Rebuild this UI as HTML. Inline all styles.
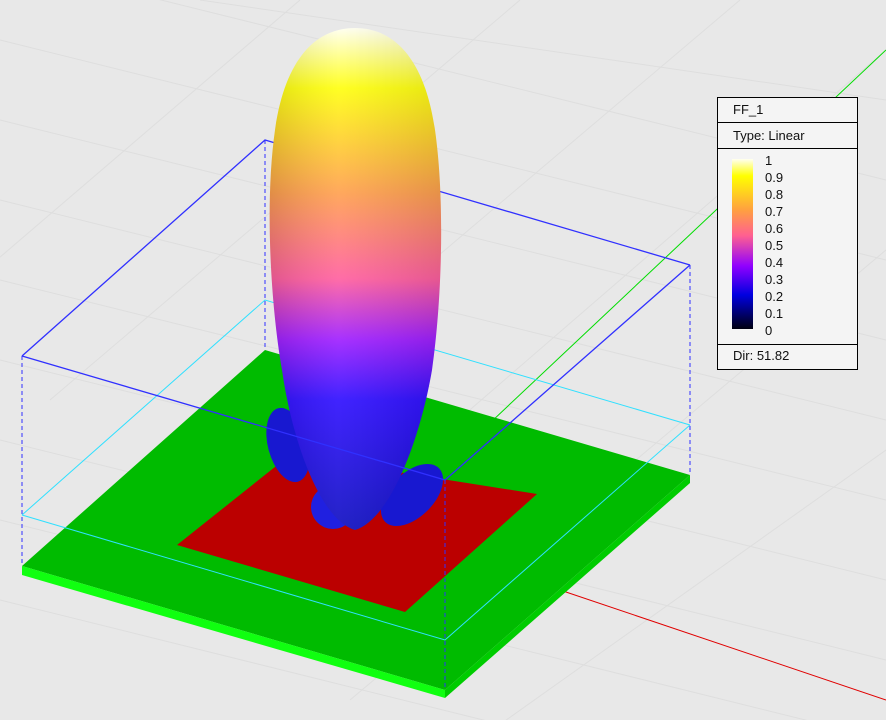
<!DOCTYPE html>
<html><head><style>
html,body{margin:0;width:886px;height:720px;overflow:hidden;background:#e8e8e8;font-family:"Liberation Sans",sans-serif}
svg{position:absolute;left:0;top:0}
#leg{position:absolute;left:717px;top:97px;width:141px;height:273px;box-sizing:border-box;background:#f4f4f4;border:1px solid #000;font-size:13px;color:#111}
.r{border-bottom:1px solid #000;padding-left:15px;box-sizing:border-box}
.n{position:absolute;left:47px;font-size:13px}
</style></head><body>
<svg width="886" height="720">
<defs>
<linearGradient id="lob" x1="0" y1="28" x2="0" y2="530" gradientUnits="userSpaceOnUse">
<stop offset="0" stop-color="#fffff0"/><stop offset="0.12" stop-color="#ffff10"/><stop offset="0.33" stop-color="#ffa050"/><stop offset="0.5" stop-color="#ff60a0"/><stop offset="0.62" stop-color="#a020ff"/><stop offset="0.74" stop-color="#3010ff"/><stop offset="1" stop-color="#1010c0"/>
</linearGradient>
<linearGradient id="shade" x1="0" x2="1">
<stop offset="0" stop-color="#000" stop-opacity="0.12"/><stop offset="0.4" stop-color="#fff" stop-opacity="0.08"/><stop offset="1" stop-color="#000" stop-opacity="0.1"/>
</linearGradient>
</defs>
<g stroke="#dedede" stroke-width="1">
<path d="M0 40L886 260M0 120L886 340M0 200L886 420M0 280L886 500M0 360L886 580M0 440L886 660M0 520L886 740M0 600L886 820M0 -40L886 180M200 0L886 100"/>
<path d="M-50 300L300 0M50 400L520 0M150 500L740 0M250 600L886 50M350 700L886 250M450 760L886 450"/>
</g>
<line x1="440" y1="470" x2="886" y2="50" stroke="#00dd00" stroke-width="1"/>
<line x1="560" y1="590" x2="886" y2="700" stroke="#e00000" stroke-width="1"/>
<polyline points="22,356 265,140 690,265" fill="none" stroke="#3030ff" stroke-width="1.3"/>
<line x1="265" y1="140" x2="265" y2="350" stroke="#3030ff" stroke-dasharray="4,3"/>
<line x1="690" y1="265" x2="690" y2="475" stroke="#3030ff" stroke-dasharray="4,3"/>
<polyline points="22,515 265,300 690,425" fill="none" stroke="#30e0ff"/>
<polygon points="22,566 265,350 690,475 445,690" fill="#00bb00"/>
<polygon points="22,566 445,690 445,698 22,575" fill="#10ff10"/>
<polygon points="445,690 690,475 690,483 445,698" fill="#00cc00"/>
<polygon points="177,545 290,455 537,494 405,612" fill="#bb0000"/>
<ellipse cx="288" cy="445" rx="20" ry="38" transform="rotate(-15 288 445)" fill="#1818d0"/>
<ellipse cx="412" cy="495" rx="22" ry="38" transform="rotate(45 412 495)" fill="#1818d0"/>
<ellipse cx="333" cy="507" rx="22" ry="22" fill="#2020e0"/>
<path d="M355 28C395 28 425 60 435 130C445 200 442 300 432 370C420 440 390 520 355 530C320 520 292 440 282 370C270 300 265 200 275 130C285 60 315 28 355 28Z" fill="url(#lob)"/>
<path d="M355 28C395 28 425 60 435 130C445 200 442 300 432 370C420 440 390 520 355 530C320 520 292 440 282 370C270 300 265 200 275 130C285 60 315 28 355 28Z" fill="url(#shade)"/>
<polyline points="22,356 445,480 690,265" fill="none" stroke="#3030ff" stroke-width="1.3"/>
<line x1="22" y1="356" x2="22" y2="566" stroke="#3030ff" stroke-dasharray="4,3"/>
<line x1="445" y1="480" x2="445" y2="690" stroke="#3030ff" stroke-dasharray="4,3"/>
<polyline points="22,515 445,640 690,425" fill="none" stroke="#30e0ff"/>
</svg>
<div id="leg">
<div class="r" style="height:25px;line-height:24px">FF_1</div>
<div class="r" style="height:26px;line-height:25px">Type: Linear</div>
<div class="r" style="height:196px;position:relative">
<div style="position:absolute;left:14px;top:10px;width:21px;height:170px;background:linear-gradient(#fffff0,#ffff00 10%,#ffa040 30%,#ff6090 45%,#9000ff 63%,#0000e0 80%,#000010)"></div>
<span class="n" style="top:4px">1</span><span class="n" style="top:21px">0.9</span><span class="n" style="top:38px">0.8</span><span class="n" style="top:55px">0.7</span><span class="n" style="top:72px">0.6</span><span class="n" style="top:89px">0.5</span><span class="n" style="top:106px">0.4</span><span class="n" style="top:123px">0.3</span><span class="n" style="top:140px">0.2</span><span class="n" style="top:157px">0.1</span><span class="n" style="top:174px">0</span>
</div>
<div style="height:23px;line-height:22px;padding-left:15px">Dir: 51.82</div>
</div>
</body></html>
